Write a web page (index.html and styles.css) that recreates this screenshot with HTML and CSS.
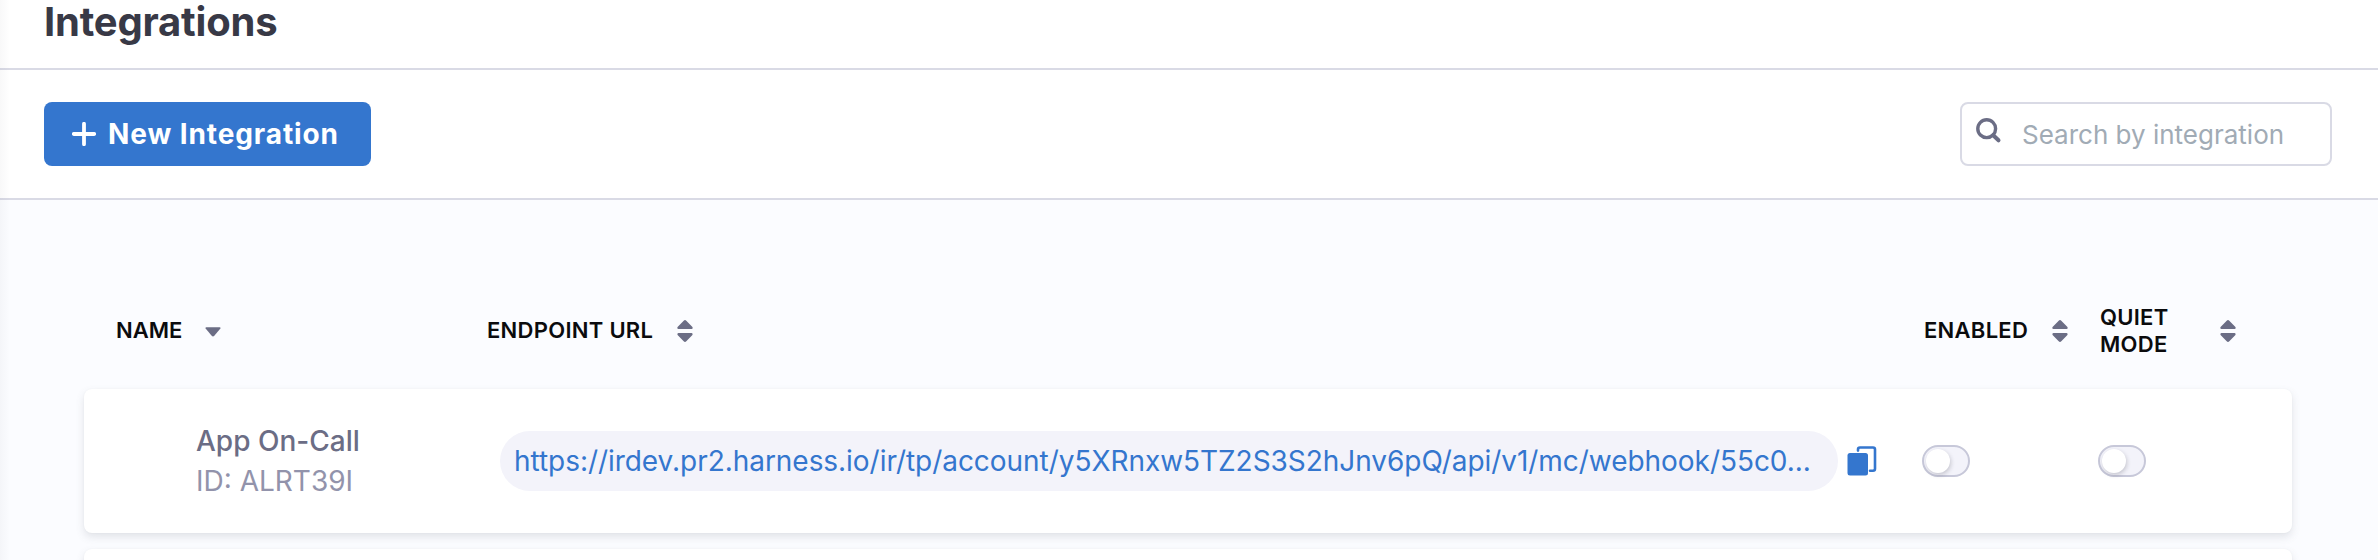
FILE: index.html
```
<!DOCTYPE html>
<html lang="en">
<head>
<meta charset="utf-8">
<title>Integrations</title>
<link rel="stylesheet" href="styles.css">
</head>
<body>
<div class="page">
  <header class="page-header"><h1 class="title">Integrations</h1></header>
  <div class="toolbar">
    <button class="new-button" type="button">
      <svg class="plus" width="24" height="24" viewBox="0 0 24 24"><path d="M12 1.8v20.4M1.8 12h20.4"/></svg>
      <span class="new-label">New Integration</span>
    </button>
    <div class="search">
      <svg class="search-icon" width="26" height="26" viewBox="0 0 26 26"><circle cx="10.7" cy="10.7" r="8.9"/><path class="handle" d="M17.2 17.2L22.5 22.3"/></svg>
      <span class="placeholder">Search by integration</span>
    </div>
  </div>
  <main class="content">
    <div class="table-head">
      <div class="th th-name"><span class="th-label">NAME</span>
        <svg class="sort" width="16" height="22" viewBox="0 0 16 22"><path d="M1.4 7.2H14.6Q16.2 7.4 15.2 8.8L9.3 15.8Q8 17.2 6.7 15.8L.8 8.8Q-.2 7.4 1.4 7.2Z"/></svg></div>
      <div class="th"><span class="th-label">ENDPOINT URL</span>
        <svg class="sort" width="16" height="22" viewBox="0 0 16 22"><path d="M1.4 9H14.6Q16.4 8.4 15.2 6.8L9.3 .8Q8 -.6 6.7 .8L.8 6.8Q-.4 8.4 1.4 9ZM1.4 13H14.6Q16.4 13.6 15.2 15.2L9.3 21.2Q8 22.6 6.7 21.2L.8 15.2Q-.4 13.6 1.4 13Z"/></svg></div>
      <div class="th th-toggle"><span class="th-label">ENABLED</span>
        <svg class="sort" width="16" height="22" viewBox="0 0 16 22"><path d="M1.4 9H14.6Q16.4 8.4 15.2 6.8L9.3 .8Q8 -.6 6.7 .8L.8 6.8Q-.4 8.4 1.4 9ZM1.4 13H14.6Q16.4 13.6 15.2 15.2L9.3 21.2Q8 22.6 6.7 21.2L.8 15.2Q-.4 13.6 1.4 13Z"/></svg></div>
      <div class="th th-toggle"><span class="th-label th-quiet">QUIET MODE</span>
        <svg class="sort" width="16" height="22" viewBox="0 0 16 22"><path d="M1.4 9H14.6Q16.4 8.4 15.2 6.8L9.3 .8Q8 -.6 6.7 .8L.8 6.8Q-.4 8.4 1.4 9ZM1.4 13H14.6Q16.4 13.6 15.2 15.2L9.3 21.2Q8 22.6 6.7 21.2L.8 15.2Q-.4 13.6 1.4 13Z"/></svg></div>
    </div>
    <div class="row">
      <div class="identity">
        <div class="name">App On-Call</div>
        <div class="id">ID: ALRT39I</div>
      </div>
      <div class="endpoint">
        <div class="url-pill"><span class="url">https://irdev.pr2.harness.io/ir/tp/account/y5XRnxw5TZ2S3S2hJnv6pQ/api/v1/mc/webhook/55c0...</span></div>
        <svg class="copy" width="30" height="30" viewBox="0 0 30 30"><rect x=".5" y="7" width="20.5" height="22.5" rx="2.5"/><path d="M11 4.6V3.4Q11 1.5 13 1.5H26Q28 1.5 28 3.5V22.7Q28 24.7 26 24.7H23"/></svg>
      </div>
      <div class="cell"><div class="toggle"><span class="knob"></span></div></div>
      <div class="cell"><div class="toggle"><span class="knob"></span></div></div>
    </div>
    <div class="row"></div>
  </main>
  <div class="edge-shadow"></div>
</div>
</body>
</html>
```
FILE: styles.css
```
* { box-sizing: border-box; }
body { margin: 0; font-family: Inter, sans-serif; }
.page { position: relative; display: flex; flex-direction: column; width: 2378px; height: 560px; overflow: hidden; background: #fff; }
.page-header { height: 70px; flex: none; padding-left: 44px; border-bottom: 2px solid #d9dae5; }
.title { margin: 0; font-size: 40px; line-height: 43px; font-weight: 650; letter-spacing: -.2px; color: #383946; }
.toolbar { height: 130px; flex: none; display: flex; align-items: center; justify-content: space-between; padding: 0 46px 0 44px; border-bottom: 2px solid #d9dae5; }
.new-button { display: flex; align-items: center; gap: 12px; width: 327px; height: 64px; padding: 0 0 0 28px; border: 0; border-radius: 8px; background: #3476ce; color: #fff; font-family: inherit; font-size: 28px; font-weight: 650; letter-spacing: .9px; white-space: nowrap; }
.plus { flex: none; fill: none; stroke: #fff; stroke-width: 3.8; stroke-linecap: round; }
.search { display: flex; align-items: center; width: 372px; height: 64px; border: 2px solid #d9dae5; border-radius: 8px; padding-left: 14px; }
.search-icon { flex: none; margin: -6px 20px 0 0; fill: none; stroke: #6b6d85; stroke-width: 3.4; }
.handle { stroke-width: 4; stroke-linecap: round; }
.placeholder { font-size: 26px; color: #a1abb5; white-space: nowrap; }
.content { flex: 1; min-height: 0; padding: 101px 86px 0 84px; background: #fbfcff; }
.table-head, .row { display: grid; grid-template-columns: 370px 1436px 176px 194px; }
.table-head { height: 60px; padding-left: 32px; margin-bottom: 28px; align-items: center; }
.th { display: flex; align-items: center; gap: 24px; padding-left: 1px; font-size: 22px; line-height: 27px; font-weight: 630; letter-spacing: .28px; color: #0b0b0d; white-space: nowrap; }
.th-name { gap: 23px; padding-left: 0; letter-spacing: 0; }
.th-toggle { padding-left: 2px; }
.th-label { margin-top: -1px; }
.th-quiet { width: 96px; white-space: normal; }
.sort { flex: none; fill: #6b6d85; }
.row { height: 144px; padding-left: 30px; margin-bottom: 16px; align-items: center; border-radius: 8px; background: #fff; box-shadow: 0 0 2px rgba(40, 41, 61, .04), 0 4px 8px rgba(96, 97, 112, .16); }
.identity { padding-left: 82px; font-size: 28px; line-height: 40px; white-space: nowrap; }
.name { font-weight: 500; color: #6b6d85; }
.id { color: #9293ab; }
.endpoint { display: flex; align-items: center; padding-left: 16px; }
.url-pill { flex: none; display: flex; align-items: center; width: 1338px; height: 60px; padding-left: 14px; border-radius: 30px; background: #f3f3fa; }
.url { font-size: 28px; letter-spacing: -.045px; color: #3476ce; white-space: nowrap; }
.copy { margin-left: 9px; fill: #3476ce; }
.copy path { fill: none; stroke: #3476ce; stroke-width: 2.6; stroke-linecap: round; }
.cell { padding-left: 2px; }
.toggle { display: flex; align-items: center; width: 48px; height: 32px; padding-left: 2px; border: 2px solid #c7c8d9; border-radius: 16px; background: #f3f3fa; }
.knob { width: 24px; height: 24px; border-radius: 50%; background: #fff; box-shadow: 1px 2px 4px rgba(40, 41, 61, .22); }
.edge-shadow { position: absolute; inset: 0 auto 0 0; width: 10px; background: linear-gradient(90deg, rgba(40, 41, 61, .03), transparent); }
```
